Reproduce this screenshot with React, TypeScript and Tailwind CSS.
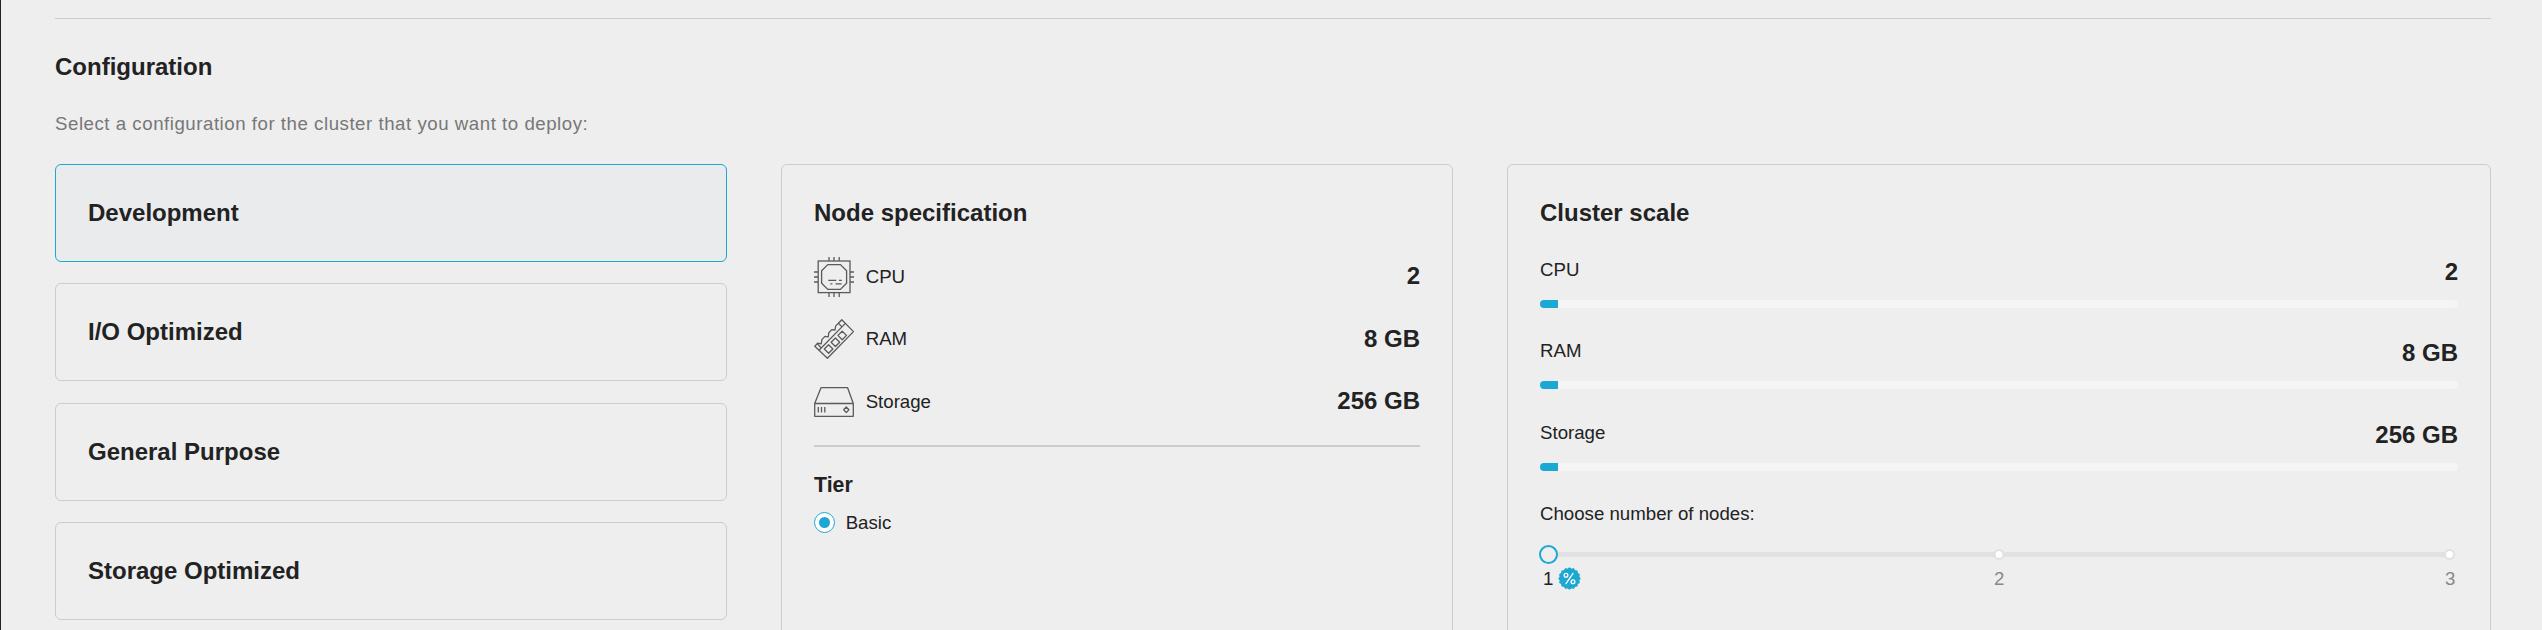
import React from "react";

const plans = ["Development", "I/O Optimized", "General Purpose", "Storage Optimized"];

function CpuIcon() {
  return (
    <svg width="40" height="40" viewBox="0 0 40 40" fill="none" stroke="#5a5a5a" strokeWidth="1.3">
      <rect x="4.2" y="4" width="31.8" height="31.6" />
      <path d="M13.8 7.6h12.6l6.2 6.2v12.4l-6.2 6.2H13.8l-6.2-6.2V13.8z" />
      <path d="M15 0v4M20 0v4M25.2 0v4M15 36v4M20 36v4M25.2 36v4M0 15h4M0 20h4M0 25h4M36 15h4M36 20h4M36 25h4" />
      <path d="M14.3 23.3h8M25 23.3h2.8M16.4 26.9h2M21.6 26.9h6" />
    </svg>
  );
}

function RamIcon() {
  return (
    <svg width="40" height="40" viewBox="0 0 40 40" fill="none" stroke="#5a5a5a" strokeWidth="1.3" strokeLinejoin="round">
      <path d="M27.8 0.7L39.5 12.6 13.4 39.3 0.8 27.2 3.6 24.2 7.2 24.8 7.9 20.6 10.9 17.4 14.2 17.8 14.8 13.8 17.8 10.6 21 11 21.7 6.9 24.4 4.3z" />
      <path d="M5 31.2L31.4 4.4M3.4 24.7l3.4 4M24.4 4.3l3.6 3.6" />
      <path d="M14.6 25.8l4.3 4.2-4.3 4.3-4.3-4.3zM21.4 19l4.3 4.2-4.3 4.3-4.3-4.3zM28.2 12.2l4.3 4.2-4.3 4.3-4.3-4.3z" />
    </svg>
  );
}

function StorageIcon() {
  return (
    <svg width="40" height="30" viewBox="0 0 40 30" fill="none" stroke="#5a5a5a" strokeWidth="1.3" strokeLinejoin="round">
      <path d="M.7 16.5L7 .7h26.6l5.7 15.8v12.8H.7zM.7 16.5h38.6" />
      <path d="M4.3 20v5.6M7.5 20v5.6M10.8 20v5.6" />
      <path d="M32.3 20l2.6 2.8-2.6 2.8-2.6-2.8z" />
    </svg>
  );
}

function DiscountBadge() {
  const points = Array.from({ length: 32 }, (_, i) => {
    const r = i % 2 ? 9.4 : 10.6;
    const a = (i * Math.PI) / 16;
    return `${(11.5 + r * Math.cos(a)).toFixed(2)},${(11.5 + r * Math.sin(a)).toFixed(2)}`;
  }).join(" ");
  return (
    <svg width="23" height="23" viewBox="0 0 23 23">
      <polygon points={points} fill="#1ba8d2" stroke="#1ba8d2" strokeWidth="1.2" strokeLinejoin="round" />
      <g fill="none" stroke="#fff" strokeWidth="1.3" strokeLinecap="round">
        <circle cx="8" cy="8.2" r="1.9" />
        <circle cx="15" cy="14.8" r="1.9" />
        <path d="M15 6.4L8 16.6" />
      </g>
    </svg>
  );
}

const specs = [
  { label: "CPU", value: "2", icon: <CpuIcon /> },
  { label: "RAM", value: "8 GB", icon: <RamIcon /> },
  { label: "Storage", value: "256 GB", icon: <StorageIcon /> },
];

export default function App() {
  return (
    <div className="h-[630px] w-[2542px] overflow-hidden border-l border-[#222] bg-[#eee] pl-[54px] pr-[51px] pt-[18px] font-['Liberation_Sans',Arial,sans-serif] text-[18.67px] leading-[27px] text-[#222]">
      <hr className="border-t border-[#ccc]" />
      <h2 className="mt-8 text-2xl leading-[31px] font-bold">Configuration</h2>
      <p className="mt-7 tracking-[0.53px] text-[#777]">
        Select a configuration for the cluster that you want to deploy:
      </p>
      <div className="mt-[27px] flex gap-[54px]">
        <div className="flex w-[672px] flex-col gap-[21.34px]">
          {plans.map((name, i) => (
            <div
              key={name}
              className={
                i === 0
                  ? "h-[98px] rounded-md border border-[#1ba8d2] bg-[#eaebed] px-8 pt-8"
                  : "h-[98px] rounded-md border border-[#ccc] px-8 pt-8"
              }
            >
              <h3 className="text-2xl leading-[31px] font-bold">{name}</h3>
            </div>
          ))}
        </div>

        <div className="h-[500px] w-[672px] rounded-md border border-[#ccc] px-8 pt-8">
          <h3 className="text-2xl leading-[31px] font-bold">Node specification</h3>
          <div className="mt-[29px] flex flex-col gap-[22.33px]">
            {specs.map((s) => (
              <div key={s.label} className="flex h-10 items-start">
                <span className="flex h-10 w-10 items-center">{s.icon}</span>
                <span className="ml-[11.67px] leading-[39px]">{s.label}</span>
                <span className="mt-[0.45px] ml-auto text-2xl leading-[37px] font-bold">{s.value}</span>
              </div>
            ))}
          </div>
          <div className="mt-[23.34px] h-0.5 bg-[#ccc]" />
          <h4 className="mt-6 text-[21.33px] leading-7 font-bold">Tier</h4>
          <div className="mt-[13px] flex items-center gap-[10.67px]">
            <span className="flex size-[21px] items-center justify-center rounded-full border border-[#1ba8d2] bg-white">
              <span className="size-[11px] rounded-full bg-[#1ba8d2]" />
            </span>
            <span className="leading-[21px]">Basic</span>
          </div>
        </div>

        <div className="h-[500px] w-[984px] rounded-md border border-[#ccc] px-8 pt-8">
          <h3 className="text-2xl leading-[31px] font-bold">Cluster scale</h3>
          <div className="mt-7 flex flex-col gap-[29.33px]">
            {specs.map((s) => (
              <div key={s.label}>
                <div className="flex justify-between">
                  <span>{s.label}</span>
                  <span className="text-2xl leading-[31px] font-bold">{s.value}</span>
                </div>
                <div className="mt-[13px] h-2 overflow-hidden rounded-full bg-[#f5f5f5]">
                  <div className="h-2 w-[2%] bg-[#1ba8d2]" />
                </div>
              </div>
            ))}
          </div>
          <p className="mt-[29px]">Choose number of nodes:</p>
          <div className="relative mt-[18px] mr-[8px] ml-[8px] flex h-[19px] items-center">
            <div className="h-[5px] w-full bg-[#e1e1e1]" />
            <span className="absolute top-0 -left-[9px] size-[19px] rounded-full border-2 border-[#1ba8d2] bg-[#eee]" />
            <span className="absolute top-1 left-1/2 size-[11px] -translate-x-1/2 rounded-full border-2 border-[#e1e1e1] bg-white" />
            <span className="absolute top-1 -right-[5px] size-[11px] rounded-full border-2 border-[#e1e1e1] bg-white" />
          </div>
          <div className="mt-px mr-[3px] ml-[3px] flex justify-between text-[#888]">
            <span className="relative w-[10px] text-[#222]">
              1
              <span className="absolute top-[2px] left-[15px]">
                <DiscountBadge />
              </span>
            </span>
            <span className="w-[10px]">2</span>
            <span className="w-[10px]">3</span>
          </div>
        </div>
      </div>
    </div>
  );
}
